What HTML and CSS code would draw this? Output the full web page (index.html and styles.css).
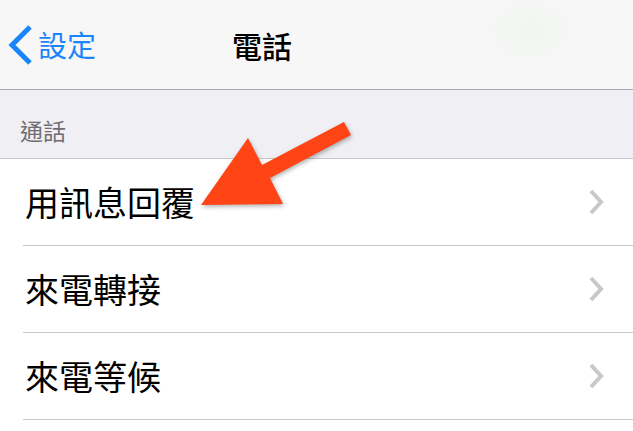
FILE: index.html
```html
<!DOCTYPE html>
<html lang="zh-Hant">
<head>
  <meta charset="UTF-8" />
  <title>電話</title>
  <link rel="stylesheet" href="styles.css">
</head>
<body>
  <div id="navbar">
    <div class="back">
      <svg width="28" height="42" viewBox="0 0 28 42"><path d="M24 3 L6 21 L24 39" fill="none" stroke="#1a84fb" stroke-width="5" stroke-linejoin="miter"/></svg>
      <span>設定</span>
    </div>
    <div class="title">電話</div>
  </div>

  <div class="section-header">通話</div>

  <div class="list">
    <div class="row"><span>用訊息回覆</span><svg class="chev" width="18" height="26" viewBox="0 0 18 26"><path d="M4 2 L14 13 L4 24" fill="none" stroke="#c7c7cc" stroke-width="4"/></svg></div>
    <div class="row"><span>來電轉接</span><svg class="chev" width="18" height="26" viewBox="0 0 18 26"><path d="M4 2 L14 13 L4 24" fill="none" stroke="#c7c7cc" stroke-width="4"/></svg></div>
    <div class="row"><span>來電等候</span><svg class="chev" width="18" height="26" viewBox="0 0 18 26"><path d="M4 2 L14 13 L4 24" fill="none" stroke="#c7c7cc" stroke-width="4"/></svg></div>
  </div>

  <!-- annotation arrow -->
  <svg class="arrow" width="633" height="431" viewBox="0 0 633 431">
    <polygon points="201,205 248,138 262,165 344,122 351,135 270,178 283,204" fill="#ff4416"/>
  </svg>
</body>
</html>
```

FILE: styles.css
```css
body {
  margin: 0;
  width: 633px;
  height: 431px;
  overflow: hidden;
  background: #fff;
  font-family: "Noto Sans CJK TC", "Noto Sans", sans-serif;
  position: relative;
}

#navbar {
  height: 89px;
  border-bottom: 1px solid #a7a7ab;
  background: #f7f7f7 radial-gradient(ellipse 60px 45px at 530px 30px, #f1f5f1, #f7f7f7);
  display: flex;
  align-items: center;
}

.back {
  display: flex;
  align-items: center;
  margin-left: 6px;
  color: #1a84fb;
  font-size: 29px;
}
.back svg { margin-right: 4px; margin-top: 1px; }
.back span { line-height: 1; }

.title {
  margin-left: 136px;
  font-size: 30px;
  font-weight: 500;
  color: #000;
  line-height: 1;
}

.section-header {
  height: 69px;
  box-sizing: border-box;
  background: #efeff4;
  border-bottom: 1px solid #c8c7cc;
  color: #6d6d72;
  font-size: 23px;
  line-height: 1;
  display: flex;
  align-items: flex-end;
  padding: 0 0 16px 20px;
}

.row {
  margin-left: 23px;
  height: 86px;
  border-bottom: 1px solid #c8c7cc;
  display: flex;
  align-items: center;
  justify-content: space-between;
  padding: 0 28px 0 2px;
  font-size: 34px;
  color: #000;
}
.row span { line-height: 1; }

.arrow {
  position: absolute;
  top: 0;
  left: 0;
  filter: drop-shadow(1px 2px 2px rgba(0,0,0,0.3));
}
```
